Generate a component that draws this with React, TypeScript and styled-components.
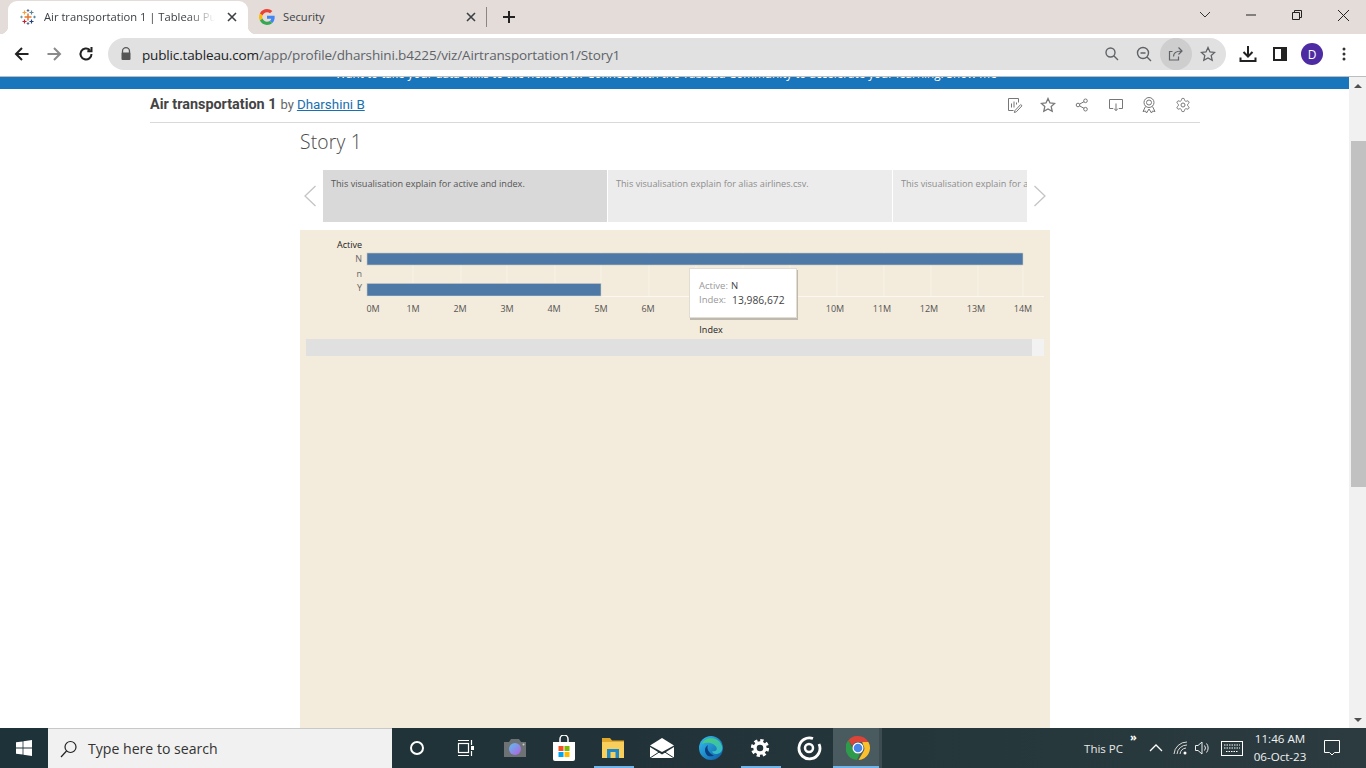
import React from "react";
import styled, { createGlobalStyle } from "styled-components";

const Global = createGlobalStyle`
  html, body { margin: 0; padding: 0; overflow: hidden; background: #fff; }
  * { box-sizing: border-box; }
`;

const Screen = styled.div`
  width: 1366px; height: 768px; display: flex; flex-direction: column; overflow: hidden;
  font-family: "Open Sans", "Liberation Sans", sans-serif; color: #333;
`;
const TabStrip = styled.div`
  height: 34px; flex: none; background: #e3dcd9; display: flex; align-items: flex-end; padding-left: 8px;
`;
const ActiveTab = styled.div`
  width: 240px; height: 33px; background: #fff; border-radius: 9px 9px 0 0; display: flex; align-items: center;
  padding: 0 11px 2px 12px; position: relative;
  &::before, &::after { content: ""; position: absolute; bottom: 0; width: 8px; height: 8px; }
  &::before { left: -8px; background: radial-gradient(circle at 0 0, transparent 8px, #fff 8.5px); }
  &::after { right: -8px; background: radial-gradient(circle at 100% 0, transparent 8px, #fff 8.5px); }
`;
const InactiveTab = styled.div`
  width: 238px; height: 33px; display: flex; align-items: center; padding: 0 10px 2px 11px;
`;
const TabTitle = styled.span<{ $fade?: boolean }>`
  flex: 1; margin-left: 8px; font-size: 11.2px; line-height: 16px; white-space: nowrap; overflow: hidden; color: #3c4043;
  ${(p) => p.$fade && `margin-right: 12px; -webkit-mask-image: linear-gradient(90deg, #000 84%, transparent 100%); mask-image: linear-gradient(90deg, #000 84%, transparent 100%);`}
`;
const TabSep = styled.div`width: 1px; height: 20px; background: #8a8684; margin: 0 0 7px 0;`;
const NewTab = styled.div`width: 44px; height: 33px; padding-bottom: 2px; display: flex; align-items: center; justify-content: center;`;
const WindowControls = styled.div`
  margin-left: auto; height: 30px; display: flex; align-items: center; align-self: flex-start; padding-right: 0;
`;
const WinBtn = styled.div`width: 46px; height: 30px; display: flex; align-items: center; justify-content: center;`;

const Toolbar = styled.div`
  height: 43px; flex: none; background: #fff; border-bottom: 1px solid #bdbdbd; display: flex; align-items: center;
  padding: 0 0 2px 6px;
`;
const NavBtn = styled.div`width: 32px; height: 32px; display: flex; align-items: center; justify-content: center;`;
const Omnibox = styled.div`
  width: 1118px; height: 32px; margin-left: 6px; border-radius: 16px; background: #e1e1e1; display: flex; align-items: center;
  padding: 0 2px 0 12px;
`;
const Url = styled.div`
  margin-left: 10px; padding-top: 1px; font-size: 13.5px; color: #5f6368; white-space: nowrap; flex: 1; letter-spacing: -0.15px;
  b { font-weight: 400; color: #202124; }
`;
const OmniBtn = styled.div<{ $on?: boolean }>`
  width: 32px; height: 32px; border-radius: 50%; display: flex; align-items: center; justify-content: center;
  background: ${(p) => (p.$on ? "#cecece" : "transparent")};
`;
const ToolGroup = styled.div`display: flex; align-items: center; margin-left: 6px;`;
const Avatar = styled.div`
  width: 22px; height: 22px; border-radius: 50%; background: #4d2ba3; color: #fff; font-size: 12px;
  display: flex; align-items: center; justify-content: center;
`;

const Content = styled.div`flex: 1; min-height: 0; display: flex;`;
const Main = styled.div`flex: 1; min-width: 0; overflow: hidden; background: #fff;`;
const Banner = styled.div`
  height: 12px; background: #1a76bc; overflow: hidden; text-align: center; color: #fff; font-size: 11.7px; line-height: 16px;
  padding-right: 17px; white-space: nowrap;
  span { display: block; margin-top: -12px; }
`;
const TitleBar = styled.div`
  width: 1050px; height: 34px; margin-left: 150px; border-bottom: 1px solid #d9d9d9; display: flex; align-items: center;
  padding-bottom: 3px; font-family: Roboto, "Liberation Sans", sans-serif; font-size: 13px; color: #666;
`;
const VizName = styled.strong`font-size: 14.4px; font-weight: 700; color: #444; margin-right: 4px;`;
const Author = styled.a`color: #1a6faf; text-decoration: underline; margin-left: 3px; font-size: 13.4px;`;
const VizActions = styled.div`margin-left: auto; display: flex; margin-top: 2px;`;
const VizAction = styled.div`width: 33.7px; height: 20px; display: flex; align-items: center; justify-content: center;`;

const Story = styled.div`width: 750px; margin-left: 300px;`;
const StoryTitle = styled.div`
  height: 47px; padding-top: 5px; font-size: 19.3px; line-height: 28px; color: #4a4a4a; font-weight: 300; letter-spacing: 0.2px;
`;
const Points = styled.div`display: flex; height: 52px;`;
const Arrow = styled.div<{ $right?: boolean }>`
  width: 23px; flex: none; display: flex; align-items: center; justify-content: center;
  padding: ${(p) => (p.$right ? "0 0 0 2px" : "0 4px 0 0")};
`;
const PointTrack = styled.div`flex: 1; min-width: 0; overflow: hidden; display: flex; gap: 1px;`;
const Point = styled.div<{ $on?: boolean }>`
  width: 284px; flex: none; padding: 8px 8px; font-size: 9.15px; line-height: 12px; white-space: nowrap; overflow: hidden;
  font-family: "Open Sans", sans-serif;
  background: ${(p) => (p.$on ? "#d9d9d9" : "#ececec")}; color: ${(p) => (p.$on ? "#555" : "#8c8c8c")};
`;
const Dashboard = styled.div`margin-top: 8px; height: 498px; background: #f3ebdb; position: relative; padding-top: 109px;`;
const ChartSvg = styled.svg`
  position: absolute; left: 0; top: 0; width: 750px; height: 109px;
  text { font-family: "Open Sans", sans-serif; font-size: 9px; }
`;
const ScrollStrip = styled.div`height: 17px; margin: 0 6px; background: #f2f2f2; display: flex;`;
const ScrollFill = styled.div`width: 726px; background: #e0e0e0;`;
const Tooltip = styled.div`
  position: absolute; left: 389px; top: 38px; width: 108px; height: 50px; background: #fff; border: 1px solid #e2ddd0;
  box-shadow: 1px 2px 0 #bdb9ae; padding: 10px 0 0 9px; font-size: 9.5px; line-height: 14px; color: #999;
`;
const TipRow = styled.div`display: flex; white-space: nowrap; b { font-weight: 400; color: #444; margin-left: 3px; }`;
const TipValue = styled.b`margin-left: 6px !important; font-size: 10.3px;`;

const Scrollbar = styled.div`
  width: 17px; flex: none; background: #f1f1f1; display: flex; flex-direction: column; align-items: center;
  justify-content: space-between; position: relative;
`;
const ScrollArrow = styled.div<{ $down?: boolean }>`
  width: 17px; height: 17px; display: flex; align-items: center; justify-content: center; 
  &::before { content: ""; border-left: 4px solid transparent; border-right: 4px solid transparent;
    ${(p) => (p.$down ? "border-top: 4px solid #505050;" : "border-bottom: 4px solid #505050;")} }
`;
const ScrollThumb = styled.div`position: absolute; left: 2px; right: 0; width: 15px; top: 64px; height: 346px; background: #c1c1c1;`;

const Taskbar = styled.div`
  height: 40px; flex: none; display: flex; align-items: stretch; background: linear-gradient(90deg, #1d3339 0%, #213338 45%, #2b3b40 100%); color: #fff;
`;
const StartBtn = styled.div`width: 48px; display: flex; align-items: center; justify-content: center;`;
const SearchBox = styled.div`
  width: 344px; background: #f1f1f1; border-top: 1px solid #c8c8c8; display: flex; align-items: center; padding-left: 12px;
  color: #333; font-size: 14.1px;
  span { margin-left: 10px; }
`;
const TaskIcon = styled.div<{ $open?: boolean; $active?: boolean }>`
  width: 49px; display: flex; align-items: center; justify-content: center; position: relative;
  background: ${(p) => (p.$active ? "linear-gradient(90deg, #4a5b5f 0 46px, #3c4c50 46px)" : "transparent")};
  ${(p) => p.$open && `&::after { content: ""; position: absolute; bottom: 0; left: ${p.$active ? "0" : "6px"}; right: 3px; height: 2px; background: #70b4ea; }`}
`;
const Tray = styled.div`margin-left: auto; display: flex; align-items: center; padding-right: 16px;`;
const ThisPc = styled.span`font-size: 11.5px; color: #e8e8e8; margin-right: 7px;`;
const TrayMore = styled.span`width: 8px; font-size: 11px; font-weight: 700; align-self: flex-start; margin: 2px 4px 0 0; line-height: 14px;`;
const TraySlot = styled.div<{ $w: number }>`width: ${(p) => p.$w}px; display: flex; align-items: center; justify-content: center;`;
const Clock = styled.div`
  width: 68px; margin-left: -6px; font-size: 11.6px; line-height: 18px; text-align: center; color: #f2f2f2;
`;
const NotifySlot = styled.div`width: 36px; display: flex; align-items: center; justify-content: center;`;

const TableauLogo = () => (
  <svg width="16" height="16" viewBox="0 0 16 16" fill="none" strokeWidth="1.2">
    <path d="M8 4.5v7M4.5 8h7" stroke="#e8762d" strokeWidth="1.5" />
    <path d="M4.5 1.5v4M2.5 3.5h4" stroke="#f0a23c" />
    <path d="M11.5 1.5v4M9.5 3.5h4" stroke="#5b879b" />
    <path d="M8 .2v2.6M6.7 1.5h2.6" stroke="#5b6591" />
    <path d="M1.5 6.7v2.6M.2 8h2.6" stroke="#7099a6" />
    <path d="M14.5 6.7v2.6M13.2 8h2.6" stroke="#59879b" />
    <path d="M4.5 10.5v4M2.5 12.5h4" stroke="#c72035" />
    <path d="M11.5 10.5v4M9.5 12.5h4" stroke="#1f457e" />
    <path d="M8 13.2v2.6M6.7 14.5h2.6" stroke="#5b6591" />
  </svg>
);
const GLogo = () => (
  <svg width="16" height="16" viewBox="0 0 48 48">
    <path fill="#EA4335" d="M24 9.5c3.5 0 6.7 1.2 9.2 3.6l6.9-6.9C35.9 2.4 30.4 0 24 0 14.6 0 6.5 5.4 2.6 13.2l8 6.2C12.5 13.7 17.8 9.5 24 9.5z" />
    <path fill="#4285F4" d="M47 24.5c0-1.6-.1-3.1-.4-4.5H24v9h12.9c-.6 3-2.2 5.5-4.7 7.2l7.7 6C44.4 37.9 47 31.8 47 24.5z" />
    <path fill="#FBBC05" d="M10.5 28.6c-.5-1.4-.8-3-.8-4.6s.3-3.2.8-4.6l-8-6.2C.9 16.5 0 20.1 0 24s.9 7.5 2.6 10.8l7.9-6.2z" />
    <path fill="#34A853" d="M24 48c6.5 0 11.9-2.1 15.9-5.8l-7.7-6c-2.1 1.4-4.9 2.3-8.2 2.3-6.2 0-11.5-4.2-13.4-9.9l-8 6.2C6.5 42.6 14.6 48 24 48z" />
  </svg>
);
const CloseX = () => (
  <svg width="10" height="10" viewBox="0 0 10 10"><path d="M1 1l8 8M9 1l-8 8" stroke="#3c4043" strokeWidth="1.6" /></svg>
);
const Stroke = ({ d, size = 16, color = "#5f6368", w = 1.5, vb = 16 }: { d: string; size?: number; color?: string; w?: number; vb?: number }) => (
  <svg width={size} height={size} viewBox={`0 0 ${vb} ${vb}`} fill="none" stroke={color} strokeWidth={w}><path d={d} /></svg>
);

const Sheet = () => (
  <svg width="16" height="16" viewBox="0 0 16 16" fill="none" stroke="#777" strokeWidth="1">
    <path d="M11.5 5.5V1.5h-10v12h5" />
    <path d="M4.5 10.5v-4M7 10.5v-6M9.5 7.5v-2" />
    <path d="M8 13.5l-.7 2 2-.7 5.7-6-1.3-1.3z" />
  </svg>
);
const StarOut = ({ c = "#777", s = 16 }: { c?: string; s?: number }) => (
  <svg width={s} height={s} viewBox="0 0 16 16" fill="none" stroke={c} strokeWidth="1.3">
    <path d="M8 1.5l2 4.4 4.7.5-3.5 3.2 1 4.7L8 11.9l-4.2 2.4 1-4.7L1.3 6.4 6 5.9z" />
  </svg>
);
const ShareNodes = () => (
  <svg width="14" height="14" viewBox="0 0 14 14" fill="none" stroke="#777" strokeWidth="1">
    <circle cx="3" cy="7" r="1.8" /><circle cx="10.5" cy="2.8" r="1.8" /><circle cx="10.5" cy="11.2" r="1.8" />
    <path d="M4.6 6.1L9 3.7M4.6 7.9L9 10.3" />
  </svg>
);
const DownloadScreen = () => (
  <svg width="16" height="16" viewBox="0 0 16 16" fill="none" stroke="#777" strokeWidth="1">
    <path d="M5 11.5H1.5v-9h13v9H11" /><path d="M8 6.5v7M6 11.5l2 2.2 2-2.2" />
  </svg>
);
const Ribbon = () => (
  <svg width="16" height="18" viewBox="0 0 16 18" fill="none" stroke="#777" strokeWidth="1">
    <circle cx="8" cy="6.5" r="5" /><circle cx="8" cy="6.5" r="2.5" />
    <path d="M4.5 10.5L2 15.5l2.5-.5 1 2L8 13l2.5 4 1-2 2.5.5-2.5-5" />
  </svg>
);
const OutlineGear = () => (
  <svg width="16" height="16" viewBox="0 0 24 24" fill="none" stroke="#777" strokeWidth="1.5">
    <path d="M12.22 2h-.44a2 2 0 0 0-2 2v.18a2 2 0 0 1-1 1.73l-.43.25a2 2 0 0 1-2 0l-.15-.08a2 2 0 0 0-2.73.73l-.22.38a2 2 0 0 0 .73 2.73l.15.1a2 2 0 0 1 1 1.72v.51a2 2 0 0 1-1 1.74l-.15.09a2 2 0 0 0-.73 2.73l.22.38a2 2 0 0 0 2.73.73l.15-.08a2 2 0 0 1 2 0l.43.25a2 2 0 0 1 1 1.73V20a2 2 0 0 0 2 2h.44a2 2 0 0 0 2-2v-.18a2 2 0 0 1 1-1.73l.43-.25a2 2 0 0 1 2 0l.15.08a2 2 0 0 0 2.73-.73l.22-.39a2 2 0 0 0-.73-2.73l-.15-.08a2 2 0 0 1-1-1.74v-.5a2 2 0 0 1 1-1.74l.15-.09a2 2 0 0 0 .73-2.73l-.22-.38a2 2 0 0 0-2.73-.73l-.15.08a2 2 0 0 1-2 0l-.43-.25a2 2 0 0 1-1-1.73V4a2 2 0 0 0-2-2z" />
    <circle cx="12" cy="12" r="3" />
  </svg>
);
const SolidGear = () => (
  <svg width="20" height="20" viewBox="0 0 20 20" fill="none" stroke="#fff">
    <circle cx="10" cy="10" r="5" strokeWidth="3.4" />
    <circle cx="10" cy="10" r="7.6" strokeWidth="3" strokeDasharray="3.2 2.77" />
  </svg>
);
const ChevronSvg = ({ left }: { left?: boolean }) => (
  <svg width="14" height="22" viewBox="0 0 14 22" fill="none" stroke="#c4c4c4" strokeWidth="1.3">
    <path d={left ? "M12.5 1L2 11l10.5 10" : "M1.5 1L12 11 1.5 21"} />
  </svg>
);
const WinLogo = () => (
  <svg width="16" height="16" viewBox="0 0 16 16" fill="#fff">
    <path d="M0 2.3l6.6-.9v6.2H0zM7.4 1.3L16 0v7.6H7.4zM0 8.4h6.6v6.2L0 13.7zM7.4 8.4H16V16l-8.6-1.3z" />
  </svg>
);
const Magnifier = () => (
  <svg width="18" height="18" viewBox="0 0 18 18" fill="none" stroke="#222" strokeWidth="1.2">
    <circle cx="10.5" cy="7" r="5.5" /><path d="M6.500 11l-5.500 6" />
  </svg>
);
const Cortana = () => (
  <svg width="16" height="16" viewBox="0 0 16 16" fill="none" stroke="#fff" strokeWidth="2"><circle cx="8" cy="8" r="6" /></svg>
);
const TaskView = () => (
  <svg width="18" height="18" viewBox="0 0 18 18" fill="none" stroke="#fff" strokeWidth="1.2">
    <path d="M1 1.5h11M1 16.5h11" /><rect x="1.5" y="4.5" width="10" height="9" /><path d="M14.5 1v5M14.5 12v5" /><rect x="14" y="7" width="3" height="4" fill="#fff" stroke="none" />
  </svg>
);
const Camera = () => (
  <svg width="24" height="22" viewBox="0 0 24 22">
    <path d="M1 5h5l2-3h8l2 3h5v15H1z" fill="#6d7275" />
    <defs><linearGradient id="lens" x1="0" y1="0" x2="1" y2="1"><stop offset="0" stopColor="#5cc0ee" /><stop offset="1" stopColor="#b45ee0" /></linearGradient></defs>
    <circle cx="12" cy="12" r="6" fill="url(#lens)" />
    <circle cx="20.5" cy="7.5" r="1" fill="#ccc" />
  </svg>
);
const Store = () => (
  <svg width="24" height="26" viewBox="0 0 24 26">
    <path d="M8 8V4a4 4 0 0 1 8 0v4" fill="none" stroke="#fff" strokeWidth="1.5" />
    <path d="M1 7h22v17a2 2 0 0 1-2 2H3a2 2 0 0 1-2-2z" fill="#fff" />
    <rect x="6.5" y="11" width="5" height="5" fill="#f25022" /><rect x="12.5" y="11" width="5" height="5" fill="#7fba00" />
    <rect x="6.5" y="17" width="5" height="5" fill="#00a4ef" /><rect x="12.5" y="17" width="5" height="5" fill="#ffb900" />
  </svg>
);
const Folder = () => (
  <svg width="22" height="22" viewBox="0 0 22 22">
    <path d="M0 1h8l2 2.5h12V5H0z" fill="#e2a82c" />
    <rect x="0" y="5" width="22" height="16" fill="#f7cf5a" />
    <rect x="5" y="12" width="12" height="9" fill="#1e88c9" /><rect x="8.5" y="15" width="5" height="6" fill="#f7cf5a" />
  </svg>
);
const Mail = () => (
  <svg width="24" height="20" viewBox="0 0 24 20">
    <path d="M0 7.5L12 0l12 7.5L12 14z" fill="#fff" /><path d="M0 9v11h24V9l-12 7.5z" fill="#fff" />
    <path d="M0 20l10-6.5M24 20l-10-6.5" stroke="#213338" strokeWidth="1" />
  </svg>
);
const Edge = () => (
  <svg width="24" height="24" viewBox="0 0 24 24">
    <defs>
      <linearGradient id="eg1" x1="0" y1="0" x2="1" y2="1"><stop offset="0" stopColor="#35c1f1" /><stop offset="1" stopColor="#0c59a4" /></linearGradient>
      <linearGradient id="eg2" x1="0" y1="0" x2="1" y2="1"><stop offset="0" stopColor="#4fd06a" /><stop offset="1" stopColor="#2fb7d8" /></linearGradient>
    </defs>
    <circle cx="12" cy="12" r="12" fill="url(#eg1)" />
    <path d="M3 8c3-8 17-8 20 2 1.5 5-2 8-6 8-3 0-4-1.5-3.5-3 3 1 5-1 4-3.5C16 7.5 8 5 3 8z" fill="url(#eg2)" />
    <path d="M9 20c-4-3-4-9 0-11-1.500 3 0 8 6 10.500-2 1-4 1-6 .5z" fill="#0a3f80" />
  </svg>
);
const TargetApp = () => (
  <svg width="26" height="26" viewBox="0 0 26 26" fill="none" stroke="#fff">
    <path d="M17 3.5A10.5 10.5 0 1 0 23 9" strokeWidth="2.8" /><circle cx="13" cy="13" r="4" strokeWidth="2.5" />
  </svg>
);
const Chrome = () => (
  <svg width="24" height="24" viewBox="0 0 24 24">
    <path d="M12 0a12 12 0 0 1 10.4 6H12a6 6 0 0 0-5.7 4.1L2.300 4.300A12 12 0 0 1 12 0z" fill="#db4437" />
    <path d="M22.400 6A12 12 0 0 1 12.500 24l5-8.500A6 6 0 0 0 17.200 9l-1-3z" fill="#fbc02d" />
    <path d="M2.300 4.300l5 8.900a6 6 0 0 0 6.500 4.500l-3 6.200A12 12 0 0 1 2.300 4.300z" fill="#2e9b4a" />
    <circle cx="12" cy="12" r="5.5" fill="#fff" /><circle cx="12" cy="12" r="4.3" fill="#4a86e8" />
  </svg>
);

const ticks = [[6, "0M"], [46, "1M"], [93, "2M"], [140, "3M"], [187, "4M"], [234, "5M"], [281, "6M"], [468, "10M"], [515, "11M"], [562, "12M"], [609, "13M"], [656, "14M"]] as const;
const grid = [113, 161, 207, 255, 301, 349, 396, 443, 490, 537, 584, 631, 678, 723];

export default function App() {
  return (
    <Screen>
      <Global />
      <TabStrip>
        <ActiveTab>
          <TableauLogo />
          <TabTitle $fade>Air transportation 1 | Tableau Public</TabTitle>
          <CloseX />
        </ActiveTab>
        <InactiveTab>
          <GLogo />
          <TabTitle>Security</TabTitle>
          <CloseX />
        </InactiveTab>
        <TabSep />
        <NewTab><Stroke d="M7 1v12M1 7h12" size={14} vb={14} color="#222" w={2} /></NewTab>
        <WindowControls>
          <WinBtn><Stroke d="M1 3l5 5 5-5" size={12} vb={12} color="#333" w={1} /></WinBtn>
          <WinBtn><Stroke d="M1 6h10" size={12} vb={12} color="#222" w={1} /></WinBtn>
          <WinBtn><Stroke d="M1.5 3.5h7v7h-7zM3.5 3.5v-2h7v7h-2" size={12} vb={12} color="#222" w={1} /></WinBtn>
          <WinBtn><Stroke d="M1 1l11 11M12 1L1 12" size={13} vb={13} color="#222" w={1} /></WinBtn>
        </WindowControls>
      </TabStrip>

      <Toolbar>
        <NavBtn><Stroke d="M14.5 8h-12M8 2L2 8l6 6" color="#222" w={2} /></NavBtn>
        <NavBtn><Stroke d="M1.5 8h12M8 2l6 6-6 6" color="#8a8a8a" w={2} /></NavBtn>
        <NavBtn><Stroke d="M13.5 8A5.5 5.5 0 1 1 11.800 4M13.500 1v4.200H9.300" color="#222" w={2} /></NavBtn>
        <Omnibox>
          <svg width="12" height="14" viewBox="0 0 12 14"><path d="M2.5 6V4.200a3.500 3.500 0 0 1 7 0V6" fill="none" stroke="#555" strokeWidth="1.3" /><rect x="1.5" y="5.5" width="9" height="7.5" rx="1" fill="#555" /></svg>
          <Url><b>public.tableau.com</b>/app/profile/dharshini.b4225/viz/Airtransportation1/Story1</Url>
          <OmniBtn><Stroke d="M6.5 2a4.500 4.500 0 1 1 0 9 4.500 4.500 0 0 1 0-9zM10 10l4 4" w={1.4} /></OmniBtn>
          <OmniBtn><Stroke d="M7 1.500a5.500 5.500 0 1 1 0 11 5.500 5.500 0 0 1 0-11zM11 11l4 4M4.500 7h5" w={1.4} /></OmniBtn>
          <OmniBtn $on><Stroke d="M10.500 10.500v3.500H1.500V5.500h3M5.500 10.500c0-4 3-5.500 8-5.500M10.500 1.500L14 5l-3.500 3.500" w={1.2} /></OmniBtn>
          <OmniBtn><StarOut c="#5f6368" /></OmniBtn>
        </Omnibox>
        <ToolGroup>
          <NavBtn><svg width="18" height="18" viewBox="0 0 18 18" fill="none" stroke="#222" strokeWidth="2"><path d="M9 1v10M4.500 7L9 11.500 13.500 7M1.500 12.500V16h15v-3.500" /></svg></NavBtn>
          <NavBtn><svg width="14" height="14" viewBox="0 0 14 14"><rect x="0" y="0" width="14" height="14" fill="#222" /><rect x="2" y="2" width="6" height="10" fill="#fff" /></svg></NavBtn>
          <NavBtn><Avatar>D</Avatar></NavBtn>
          <NavBtn><svg width="4" height="14" viewBox="0 0 4 14" fill="#333"><circle cx="2" cy="2" r="1.5" /><circle cx="2" cy="7" r="1.5" /><circle cx="2" cy="12" r="1.5" /></svg></NavBtn>
        </ToolGroup>
      </Toolbar>

      <Content>
        <Main>
          <Banner><span>Want to take your data skills to the next level? Connect with the Tableau Community to accelerate your learning. Show me</span></Banner>
          <TitleBar>
            <VizName>Air transportation 1</VizName> by <Author>Dharshini B</Author>
            <VizActions>
              <VizAction><Sheet /></VizAction>
              <VizAction><StarOut /></VizAction>
              <VizAction><ShareNodes /></VizAction>
              <VizAction><DownloadScreen /></VizAction>
              <VizAction><Ribbon /></VizAction>
              <VizAction><OutlineGear /></VizAction>
            </VizActions>
          </TitleBar>
          <Story>
            <StoryTitle>Story 1</StoryTitle>
            <Points>
              <Arrow><ChevronSvg left /></Arrow>
              <PointTrack>
                <Point $on>This visualisation explain for active and index.</Point>
                <Point>This visualisation explain for alias airlines.csv.</Point>
                <Point>This visualisation explain for airports and countries.</Point>
              </PointTrack>
              <Arrow $right><ChevronSvg /></Arrow>
            </Points>
            <Dashboard>
              <ChartSvg viewBox="0 0 750 109">
                {grid.map((x) => <line key={x} x1={x} x2={x} y1={22} y2={66} stroke="#f8f4ea" strokeWidth="1" />)}
                <line x1="67" x2="744" y1="66.5" y2="66.5" stroke="#fbf8f1" />
                <rect x="67" y="23" width="656" height="12" fill="#4e79a7" stroke="#c9c9c2" strokeWidth="0.6" />
                <rect x="67" y="53.5" width="234" height="12.5" fill="#4e79a7" stroke="#c9c9c2" strokeWidth="0.6" />
                <text x="62" y="18" textAnchor="end" fill="#222">Active</text>
                <text x="62" y="32" textAnchor="end" fill="#666">N</text>
                <text x="62" y="47" textAnchor="end" fill="#666">n</text>
                <text x="62" y="61" textAnchor="end" fill="#666">Y</text>
                {ticks.map(([x, t]) => <text key={t} x={67 + x} y="82" textAnchor="middle" fill="#555">{t}</text>)}
                <text x="411" y="103" textAnchor="middle" fill="#222">Index</text>
              </ChartSvg>
              <ScrollStrip><ScrollFill /></ScrollStrip>
              <Tooltip>
                <TipRow>Active:<b>N</b></TipRow>
                <TipRow>Index:<TipValue>13,986,672</TipValue></TipRow>
              </Tooltip>
            </Dashboard>
          </Story>
        </Main>
        <Scrollbar>
          <ScrollArrow />
          <ScrollThumb />
          <ScrollArrow $down />
        </Scrollbar>
      </Content>

      <Taskbar>
        <StartBtn><WinLogo /></StartBtn>
        <SearchBox><Magnifier /><span>Type here to search</span></SearchBox>
        <TaskIcon><Cortana /></TaskIcon>
        <TaskIcon><TaskView /></TaskIcon>
        <TaskIcon><Camera /></TaskIcon>
        <TaskIcon><Store /></TaskIcon>
        <TaskIcon $open><Folder /></TaskIcon>
        <TaskIcon><Mail /></TaskIcon>
        <TaskIcon><Edge /></TaskIcon>
        <TaskIcon $open><SolidGear /></TaskIcon>
        <TaskIcon><TargetApp /></TaskIcon>
        <TaskIcon $open $active><Chrome /></TaskIcon>
        <Tray>
          <ThisPc>This PC</ThisPc>
          <TrayMore>»</TrayMore>
          <TraySlot $w={28}><Stroke d="M1 10l6-6 6 6" size={14} vb={14} color="#fff" w={1.3} /></TraySlot>
          <TraySlot $w={22}><svg width="16" height="16" viewBox="0 0 16 16" fill="none" stroke="#ddd" strokeWidth="1"><path d="M1 14A13 13 0 0 1 14 2M4 14a10 10 0 0 1 10-9M7 14a7 7 0 0 1 6-6" /><circle cx="12" cy="13" r="1.5" fill="#fff" stroke="none" /></svg></TraySlot>
          <TraySlot $w={20}><svg width="16" height="16" viewBox="0 0 16 16" fill="none" stroke="#eee" strokeWidth="1"><path d="M1.5 5.5h2.500L8 2v12l-4-3.500H1.500zM10.500 5.500a4 4 0 0 1 0 5M12.500 3.500a7 7 0 0 1 0 9" /></svg></TraySlot>
          <TraySlot $w={40}><svg width="22" height="15" viewBox="0 0 22 15" fill="none" stroke="#fff" strokeWidth="1"><rect x=".5" y=".5" width="21" height="14" /><path d="M3 4h16M3 7h16M5 10.500h12" strokeDasharray="1.5 1" /></svg></TraySlot>
          <Clock>11:46 AM<br />06-Oct-23</Clock>
          <NotifySlot><svg width="16" height="16" viewBox="0 0 16 16" fill="none" stroke="#fff" strokeWidth="1"><path d="M.5.5h15v12h-5L8 15l-2.500-2.500h-5z" /></svg></NotifySlot>
        </Tray>
      </Taskbar>
    </Screen>
  );
}
